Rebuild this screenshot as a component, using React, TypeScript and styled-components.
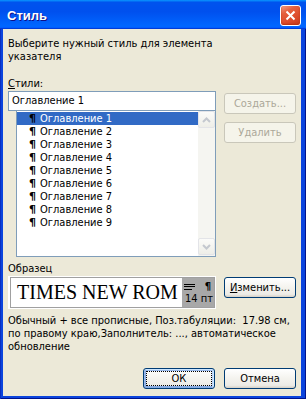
import React from "react";
import styled, { createGlobalStyle, css } from "styled-components";

const UI = `"DejaVu Sans Condensed", "Liberation Sans", sans-serif`;

const GlobalStyle = createGlobalStyle`
  html, body { margin: 0; padding: 0; }
  body { width: 306px; height: 399px; overflow: hidden; background: #ece9d8; }
  * { box-sizing: border-box; }
`;

const Window = styled.div`
  width: 306px;
  height: 399px;
  display: flex;
  flex-direction: column;
  background: #0b44dd;
  box-shadow: inset 1px 0 #0a2fc0, inset -1px 0 #00138c, inset 0 -1px #00138c;
`;

const TitleBar = styled.div`
  height: 29px;
  flex: none;
  display: flex;
  align-items: center;
  justify-content: space-between;
  padding: 0 5px 0 7px;
  background: linear-gradient(
    180deg,
    #0997ff,
    #0053ee 8%,
    #0050ee 40%,
    #06f 88%,
    #06f 93%,
    #005bff 95%,
    #003dd7 96%,
    #003dd7
  );
`;

const TitleText = styled.span`
  font: bold 13px "Liberation Sans", sans-serif;
  color: #fff;
  text-shadow: 1px 1px #0f1089;
  margin-top: 2px;
`;

const CloseButton = styled.div`
  width: 21px;
  height: 21px;
  margin-top: 2px;
  border: 1px solid #fff;
  border-radius: 3px;
  background: linear-gradient(150deg, #f3a088 0%, #e5603e 30%, #dc4b2b 65%, #c63a1b 100%);
  box-shadow: inset 0 -1px 2px #b83210;
  display: flex;
  align-items: center;
  justify-content: center;
`;

const Client = styled.div`
  flex: 1;
  margin: 0 5px 3px 3px;
  background: #ece9d8;
  padding: 8px 5px 0 5px;
  display: flex;
  flex-direction: column;
  font: 11px/13px ${UI};
  color: #000;
`;

const TextBlock = styled.div<{ $mt?: number }>`
  margin-top: ${(p) => p.$mt ?? 0}px;
  white-space: pre;
`;

const Row = styled.div<{ $mt?: number; $gap: number }>`
  display: flex;
  align-items: flex-start;
  gap: ${(p) => p.$gap}px;
  margin-top: ${(p) => p.$mt ?? 0}px;
`;

const LeftColumn = styled.div`
  width: 208px;
  flex: none;
  display: flex;
  flex-direction: column;
`;

const ButtonColumn = styled.div`
  width: 72px;
  padding-top: 2px;
  display: flex;
  flex-direction: column;
  gap: 8px;
`;

const TextBox = styled.div`
  height: 20px;
  border: 1px solid #7f9db9;
  background: #fff;
  padding: 2px 0 0 3px;
  position: relative;
  z-index: 1;
`;

const ListBox = styled.div`
  margin: -1px 0 0 8px;
  height: 147px;
  border: 1px solid #7f9db9;
  background: #fff;
  display: flex;
`;

const Items = styled.div`
  flex: 1;
  padding-top: 1px;
`;

const Item = styled.div<{ $selected?: boolean }>`
  height: 13px;
  display: flex;
  align-items: center;
  padding-left: 12px;
  ${(p) =>
    p.$selected &&
    css`
      background: #316ac5;
      color: #fff;
    `}
`;

const Pilcrow = styled.span`
  font: bold 11px/13px "DejaVu Sans", sans-serif;
  color: #000;
  width: 11px;
`;

const ScrollBar = styled.div`
  width: 17px;
  background: #f5f5f1;
  display: flex;
  flex-direction: column;
  justify-content: space-between;
  padding-bottom: 1px;
`;

const ScrollButton = styled.div`
  width: 17px;
  height: 17px;
  border: 1px solid #e3e4e8;
  border-radius: 2px;
  background: linear-gradient(180deg, #fbfbf9, #eeeee8);
  display: flex;
  align-items: center;
  justify-content: center;
`;

const Button = styled.div<{ $width?: number; $disabled?: boolean; $focused?: boolean; $mt?: number }>`
  width: ${(p) => p.$width ?? 72}px;
  height: 21px;
  flex: none;
  margin-top: ${(p) => p.$mt ?? 0}px;
  border: 1px solid #003c74;
  border-radius: 3px;
  background: linear-gradient(180deg, #ffffff 0%, #f4f3ee 50%, #ecebe6 86%, #d6d0c5 100%);
  display: flex;
  align-items: center;
  justify-content: center;
  color: #000;
  padding: 2px;
  ${(p) =>
    p.$disabled &&
    css`
      border-color: #c9c7ba;
      background: #f5f4ea;
      color: #aca899;
    `}
  ${(p) =>
    p.$focused &&
    css`
      box-shadow: inset -1px 1px #cee7ff, inset 1px 2px #98b8ea, inset -2px 2px #bcd4f6,
        inset 1px -1px #89ade4, inset 2px -2px #89ade4;
    `}
`;

const ButtonLabel = styled.span<{ $focused?: boolean }>`
  width: 100%;
  height: 100%;
  display: flex;
  align-items: center;
  justify-content: center;
  white-space: pre;
  border: 1px dotted ${(p) => (p.$focused ? "#000" : "transparent")};
`;

const Access = styled.span`
  text-decoration: underline;
`;

const SampleBox = styled.div`
  width: 208px;
  height: 33px;
  flex: none;
  background: #fff;
  padding: 1px 1px 1px 2px;
`;

const SampleInner = styled.div`
  height: 100%;
  border: 1px solid #a0a0a0;
  display: flex;
  overflow: hidden;
`;

const SampleText = styled.div`
  flex: 1;
  min-width: 0;
  white-space: nowrap;
  font: 20px/29px "Liberation Serif", serif;
  padding-left: 6px;
`;

const SampleInfo = styled.div`
  width: 32px;
  flex: none;
  background: #a8a8a8;
  display: flex;
  flex-direction: column;
  padding: 4px 3px 0 2px;
`;

const InfoTop = styled.div`
  height: 9px;
  display: flex;
  align-items: center;
  justify-content: space-between;
`;

const InfoPilcrow = styled.span`
  font: bold 10px/9px "DejaVu Sans", sans-serif;
`;

const InfoSize = styled.span`
  margin-top: 2px;
  line-height: 12px;
  white-space: nowrap;
  padding-left: 1px;
`;

const ButtonsRow = styled.div`
  margin-top: 15px;
  display: flex;
  justify-content: flex-end;
  gap: 9px;
`;

const ChevronUp = () => (
  <svg width="9" height="6" viewBox="0 0 9 6">
    <path d="M1 5 L4.5 1.5 L8 5" fill="none" stroke="#c4c8cf" strokeWidth="2" />
  </svg>
);

const ChevronDown = () => (
  <svg width="9" height="6" viewBox="0 0 9 6">
    <path d="M1 1 L4.5 4.5 L8 1" fill="none" stroke="#c4c8cf" strokeWidth="2" />
  </svg>
);

const AlignIcon = () => (
  <svg width="11" height="6" viewBox="0 0 11 6">
    <rect x="0" y="0" width="11" height="1" fill="#000" />
    <rect x="0" y="2" width="11" height="1" fill="#000" />
    <rect x="0" y="5" width="8" height="1" fill="#000" />
  </svg>
);

const items = Array.from({ length: 9 }, (_, i) => `Оглавление ${i + 1}`);

export default function App() {
  return (
    <>
      <GlobalStyle />
      <Window>
        <TitleBar>
          <TitleText>Стиль</TitleText>
          <CloseButton>
            <svg width="11" height="11" viewBox="0 0 11 11">
              <path d="M1.5 1.5 L9.5 9.5 M9.5 1.5 L1.5 9.5" stroke="#fff" strokeWidth="2" />
            </svg>
          </CloseButton>
        </TitleBar>
        <Client>
          <TextBlock>
            {"Выберите нужный стиль для элемента"}
            <br />
            {"указателя"}
          </TextBlock>
          <TextBlock $mt={14}>
            <Access>С</Access>тили:
          </TextBlock>
          <Row $mt={1} $gap={8}>
            <LeftColumn>
              <TextBox>Оглавление 1</TextBox>
              <ListBox>
                <Items>
                  {items.map((t, i) => (
                    <Item key={t} $selected={i === 0}>
                      <Pilcrow>¶</Pilcrow>
                      {t}
                    </Item>
                  ))}
                </Items>
                <ScrollBar>
                  <ScrollButton>
                    <ChevronUp />
                  </ScrollButton>
                  <ScrollButton>
                    <ChevronDown />
                  </ScrollButton>
                </ScrollBar>
              </ListBox>
            </LeftColumn>
            <ButtonColumn>
              <Button $disabled>
                <ButtonLabel>Создать...</ButtonLabel>
              </Button>
              <Button $disabled>
                <ButtonLabel>Удалить</ButtonLabel>
              </Button>
            </ButtonColumn>
          </Row>
          <TextBlock $mt={5}>Образец</TextBlock>
          <Row $mt={1} $gap={8}>
            <SampleBox>
              <SampleInner>
                <SampleText>TIMES NEW ROM</SampleText>
                <SampleInfo>
                  <InfoTop>
                    <AlignIcon />
                    <InfoPilcrow>¶</InfoPilcrow>
                  </InfoTop>
                  <InfoSize>14 пт</InfoSize>
                </SampleInfo>
              </SampleInner>
            </SampleBox>
            <Button $mt={1}>
              <ButtonLabel>
                <Access>И</Access>зменить...
              </ButtonLabel>
            </Button>
          </Row>
          <TextBlock $mt={5}>
            {"Обычный + все прописные, Поз.табуляции:  17.98 см,"}
            <br />
            {"по правому краю,Заполнитель: ..., автоматическое"}
            <br />
            {"обновление"}
          </TextBlock>
          <ButtonsRow>
            <Button $focused>
              <ButtonLabel $focused>ОК</ButtonLabel>
            </Button>
            <Button>
              <ButtonLabel>Отмена</ButtonLabel>
            </Button>
          </ButtonsRow>
        </Client>
      </Window>
    </>
  );
}
